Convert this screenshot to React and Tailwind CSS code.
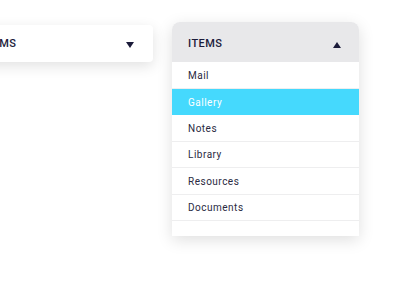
const items = ["Mail", "Gallery", "Notes", "Library", "Resources", "Documents"]

function Caret({ up }) {
    return (
        <svg width="8" height="6" viewBox="0 0 8 6" className="block">
            {up
                ? <polygon points="4,0 8,6 0,6" fill="#1b1b3a" />
                : <polygon points="0,0 8,0 4,6" fill="#1b1b3a" />}
        </svg>
    )
}

export default function App() {
    return (
        <div className="w-[400px] h-[300px] bg-white overflow-hidden relative" style={{ fontFamily: "Roboto, 'Liberation Sans', sans-serif" }}>
            <div className="flex items-start gap-[19px] pt-[22px] -ml-[34px]">
                {/* closed dropdown */}
                <div className="mt-[3px] w-[187px] h-[37px] shrink-0 bg-white rounded-[4px] shadow-[0_4px_14px_rgba(0,0,0,0.12)] flex items-center justify-between pl-[16px] pr-[19px] pt-[2px]">
                    <span className="text-[11px] font-medium tracking-[0.04em] text-[#1b1b3a]">ITEMS</span>
                    <Caret />
                </div>

                {/* open dropdown */}
                <div className="w-[187px] shrink-0 bg-white rounded-t-[8px] shadow-[0_4px_16px_rgba(0,0,0,0.13)] pb-[15px]">
                    <div className="h-[40px] bg-[#e8e8ea] rounded-t-[8px] flex items-center justify-between pl-[16px] pr-[18px] pt-[5px]">
                        <span className="text-[11px] font-medium tracking-[0.04em] text-[#1b1b3a]">ITEMS</span>
                        <Caret up />
                    </div>
                    {items.map((item) => (
                        <div
                            key={item}
                            className={
                                item === "Gallery"
                                    ? "h-[26.5px] flex items-center pl-[16px] bg-[#45d9fd] text-white text-[10px] tracking-[0.05em] pt-[1px]"
                                    : "h-[26.5px] flex items-center pl-[16px] border-b border-[#eeeeef] text-[#2a2a42] text-[10px] tracking-[0.05em] pt-[1px]"
                            }
                        >
                            {item}
                        </div>
                    ))}
                </div>
            </div>
        </div>
    )
}
